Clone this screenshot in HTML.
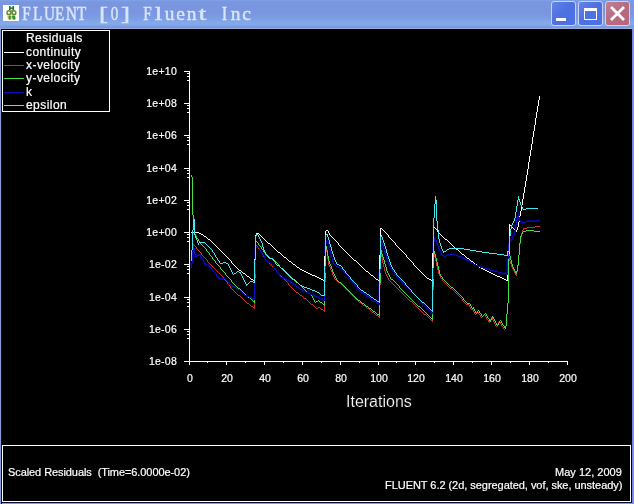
<!DOCTYPE html>
<html><head><meta charset="utf-8"><title>FLUENT [0] Fluent Inc</title>
<style>
html,body{margin:0;padding:0;background:#000;}
body{width:634px;height:504px;position:relative;overflow:hidden;font-family:"Liberation Sans",sans-serif;color:#fff;}
.t{position:absolute;white-space:nowrap;line-height:1;will-change:transform;-webkit-text-stroke:0.2px #fff;}
#tb{position:absolute;left:0;top:0;width:634px;height:29px;background:linear-gradient(to bottom,#7da2e7 0px,#7a96df 2px,#7a96df 13px,#7c9de3 18px,#83a9ec 23px,#82a7ea 25px,#7b99e0 27px,#7b99e0 28px,#97a9d6 28px,#97a9d6 29px);}
#bl{position:absolute;left:0;top:29px;width:2px;height:475px;background:linear-gradient(to right,#8c9cd6 0,#8c9cd6 1px,#0c0c2c 1px,#0c0c2c 2px);}
#br{position:absolute;left:632px;top:29px;width:2px;height:475px;background:linear-gradient(to right,#7384da 0,#7384da 1px,#8296e2 1px,#8296e2 2px);}
#bb{position:absolute;left:0;top:502px;width:634px;height:2px;background:linear-gradient(to bottom,#0c0c2c 0,#0c0c2c 1px,#8c9cd6 1px,#8c9cd6 2px);}
#ttl{left:21px;top:4px;font-family:"Liberation Serif",serif;font-size:18px;color:#d9e3fa;line-height:20px;-webkit-text-stroke:0.45px #dbe5fb;}
#ttl span{display:inline-block;width:11.02px;text-align:center;transform:scaleX(0.84);}
#ttl span.bk{transform:scaleX(1.5);}
#ttl span.lc{transform:scaleX(1.08);}
.btn{position:absolute;top:1px;width:23px;height:23px;border:1px solid #c6d3f7;border-radius:3px;}
.yl{font-size:10.5px;width:40px;text-align:right;left:137px;letter-spacing:0.25px;}
.xl{font-size:10.5px;width:40px;text-align:center;top:373px;}
.lg{font-size:12px;left:23px;letter-spacing:0.45px;}
.bt{font-size:11px;letter-spacing:-0.08px;}
</style></head><body>
<div id="tb"></div><div id="bb"></div><div id="bl"></div><div id="br"></div>
<svg style="position:absolute;left:3px;top:5px" width="16" height="16" viewBox="0 0 16 16"><rect width="16" height="16" fill="#fdfefb"/><g fill="#1f7d3a"><rect x="6" y="1" width="1.7" height="4.2"/><rect x="9.4" y="1" width="1.7" height="4.2"/><rect x="6.5" y="2.4" width="4" height="1.5"/></g><g fill="none" stroke="#5f8c30" stroke-width="1.5"><ellipse cx="5.9" cy="7.7" rx="1.9" ry="1.9"/><ellipse cx="10.9" cy="7.7" rx="1.9" ry="1.9"/></g><rect x="7.6" y="5.2" width="2" height="1.2" fill="#8a6a28"/><g fill="#3c8c2c"><rect x="5.6" y="10.6" width="2.2" height="4"/><rect x="8.6" y="10.6" width="3.6" height="2"/><rect x="9.6" y="12" width="2.8" height="2.6"/></g><g fill="#b4a63a"><rect x="4.6" y="10.8" width="1.2" height="2.4"/><rect x="8.4" y="12.6" width="1.2" height="1.6"/></g></svg>
<div class="t" id="ttl"><span>F</span><span>L</span><span>U</span><span>E</span><span>N</span><span>T</span><span>&nbsp;</span><span class="bk">[</span><span>0</span><span class="bk">]</span><span>&nbsp;</span><span>F</span><span class="bk">l</span><span class="lc">u</span><span class="lc">e</span><span class="lc">n</span><span class="bk">t</span><span>&nbsp;</span><span>I</span><span class="lc">n</span><span class="lc">c</span></div>
<div class="btn" style="left:551px;background:linear-gradient(135deg,#6384ea 0%,#4f70e0 45%,#4a72e6 100%);"></div>
<div class="btn" style="left:578px;background:linear-gradient(135deg,#6384ea 0%,#4f70e0 45%,#4a72e6 100%);"></div>
<div class="btn" style="left:605px;background:linear-gradient(135deg,#c47e94 0%,#b86c80 45%,#b4667c 100%);"></div>
<svg style="position:absolute;left:546px;top:0" width="88" height="29" viewBox="546 0 88 29"><rect x="556" y="18" width="10" height="3" fill="#fff" shape-rendering="crispEdges"/><g shape-rendering="crispEdges"><rect x="584" y="8" width="13" height="3" fill="#fff"/><rect x="584.5" y="8.5" width="12" height="11" fill="none" stroke="#fff"/></g><path d="M611 7 L624 20 M624 7 L611 20" stroke="#fff" stroke-width="2.8" stroke-linecap="butt" fill="none"/></svg>
<svg width="634" height="504" viewBox="0 0 634 504" style="position:absolute;left:0;top:0" shape-rendering="crispEdges"><g stroke="#fff" stroke-width="1" fill="none"><line x1="189.5" y1="71" x2="189.5" y2="362"/><line x1="184" y1="361.5" x2="568" y2="361.5"/><line x1="184" y1="71.5" x2="189" y2="71.5"/><line x1="187" y1="73.5" x2="189" y2="73.5"/><line x1="187" y1="76.5" x2="189" y2="76.5"/><line x1="187" y1="80.5" x2="189" y2="80.5"/><line x1="184" y1="103.5" x2="189" y2="103.5"/><line x1="187" y1="105.5" x2="189" y2="105.5"/><line x1="187" y1="108.5" x2="189" y2="108.5"/><line x1="187" y1="112.5" x2="189" y2="112.5"/><line x1="184" y1="135.5" x2="189" y2="135.5"/><line x1="187" y1="137.5" x2="189" y2="137.5"/><line x1="187" y1="140.5" x2="189" y2="140.5"/><line x1="187" y1="144.5" x2="189" y2="144.5"/><line x1="184" y1="168.5" x2="189" y2="168.5"/><line x1="187" y1="170.5" x2="189" y2="170.5"/><line x1="187" y1="173.5" x2="189" y2="173.5"/><line x1="187" y1="177.5" x2="189" y2="177.5"/><line x1="184" y1="200.5" x2="189" y2="200.5"/><line x1="187" y1="202.5" x2="189" y2="202.5"/><line x1="187" y1="205.5" x2="189" y2="205.5"/><line x1="187" y1="209.5" x2="189" y2="209.5"/><line x1="184" y1="232.5" x2="189" y2="232.5"/><line x1="187" y1="234.5" x2="189" y2="234.5"/><line x1="187" y1="237.5" x2="189" y2="237.5"/><line x1="187" y1="241.5" x2="189" y2="241.5"/><line x1="184" y1="264.5" x2="189" y2="264.5"/><line x1="187" y1="266.5" x2="189" y2="266.5"/><line x1="187" y1="269.5" x2="189" y2="269.5"/><line x1="187" y1="273.5" x2="189" y2="273.5"/><line x1="184" y1="297.5" x2="189" y2="297.5"/><line x1="187" y1="299.5" x2="189" y2="299.5"/><line x1="187" y1="302.5" x2="189" y2="302.5"/><line x1="187" y1="306.5" x2="189" y2="306.5"/><line x1="184" y1="329.5" x2="189" y2="329.5"/><line x1="187" y1="331.5" x2="189" y2="331.5"/><line x1="187" y1="334.5" x2="189" y2="334.5"/><line x1="187" y1="338.5" x2="189" y2="338.5"/><line x1="184" y1="361.5" x2="189" y2="361.5"/><line x1="189.50" y1="362" x2="189.50" y2="365"/><line x1="207.50" y1="362" x2="207.50" y2="363"/><line x1="226.50" y1="362" x2="226.50" y2="365"/><line x1="245.50" y1="362" x2="245.50" y2="363"/><line x1="264.50" y1="362" x2="264.50" y2="365"/><line x1="283.50" y1="362" x2="283.50" y2="363"/><line x1="302.50" y1="362" x2="302.50" y2="365"/><line x1="321.50" y1="362" x2="321.50" y2="363"/><line x1="340.50" y1="362" x2="340.50" y2="365"/><line x1="359.50" y1="362" x2="359.50" y2="363"/><line x1="378.50" y1="362" x2="378.50" y2="365"/><line x1="396.50" y1="362" x2="396.50" y2="363"/><line x1="415.50" y1="362" x2="415.50" y2="365"/><line x1="434.50" y1="362" x2="434.50" y2="363"/><line x1="453.50" y1="362" x2="453.50" y2="365"/><line x1="472.50" y1="362" x2="472.50" y2="363"/><line x1="491.50" y1="362" x2="491.50" y2="365"/><line x1="510.50" y1="362" x2="510.50" y2="363"/><line x1="529.50" y1="362" x2="529.50" y2="365"/><line x1="548.50" y1="362" x2="548.50" y2="363"/><line x1="567.50" y1="362" x2="567.50" y2="365"/></g><path d="M190.5 262v6M191.5 262v6M192.5 244v20M193.5 244v20M194.5 248v10M195.5 248v10M196.5 254v4M197.5 254v4M198.5 254v2M199.5 254v2M200.5 254v6M201.5 254v6M202.5 258v4M203.5 258v4M204.5 262v4M205.5 262v4M206.5 264v2M207.5 264v2M208.5 264v4M209.5 264v4M210.5 266v4M211.5 266v4M212.5 270v2M213.5 270v2M214.5 272v2M215.5 272v2M216.5 274v4M217.5 274v4M218.5 276v4M219.5 276v4M220.5 278v2M221.5 278v2M222.5 278v2M223.5 278v2M224.5 278v2M225.5 278v2M226.5 280v2M227.5 280v2M228.5 282v2M229.5 282v2M230.5 284v2M231.5 284v2M232.5 286v2M233.5 286v2M234.5 286v2M235.5 286v2M236.5 288v2M237.5 288v2M238.5 288v2M239.5 288v2M240.5 290v2M241.5 290v2M242.5 292v2M243.5 292v2M244.5 294v2M245.5 294v2M246.5 294v4M247.5 294v4M248.5 296v2M249.5 296v2M250.5 296v2M251.5 296v2M252.5 298v2M253.5 298v2M254.5 248v52M255.5 248v52M256.5 246v2M257.5 246v2M258.5 246v4M259.5 246v4M260.5 250v4M261.5 250v4M262.5 252v4M263.5 252v4M264.5 256v4M265.5 256v4M266.5 260v2M267.5 260v2M268.5 262v2M269.5 262v2M270.5 262v4M271.5 262v4M272.5 264v4M273.5 264v4M274.5 268v2M275.5 268v2M276.5 270v4M277.5 270v4M278.5 272v4M279.5 272v4M280.5 276v2M281.5 276v2M282.5 276v4M283.5 276v4M284.5 278v2M285.5 278v2M286.5 278v4M287.5 278v4M288.5 280v2M289.5 280v2M290.5 280v4M291.5 280v4M292.5 282v4M293.5 282v4M294.5 284v2M295.5 284v2M296.5 286v2M297.5 286v2M298.5 286v4M299.5 286v4M300.5 288v2M301.5 288v2M302.5 290v2M303.5 290v2M304.5 290v2M305.5 290v2M306.5 292v2M307.5 292v2M308.5 292v2M309.5 292v2M310.5 294v2M311.5 294v2M312.5 294v2M313.5 294v2M314.5 294v4M315.5 294v4M316.5 296v2M317.5 296v2M318.5 296v4M319.5 296v4M320.5 298v2M321.5 298v2M322.5 298v4M323.5 298v4M324.5 242v60M325.5 242v60M326.5 240v4M327.5 240v4M328.5 240v10M329.5 240v10M330.5 250v8M331.5 250v8M332.5 258v6M333.5 258v6M334.5 264v2M335.5 264v2M336.5 266v2M337.5 266v2M338.5 266v2M339.5 266v2M340.5 268v2M341.5 268v2M342.5 268v4M343.5 268v4M344.5 272v2M345.5 272v2M346.5 274v2M347.5 274v2M348.5 276v4M349.5 276v4M350.5 278v4M351.5 278v4M352.5 280v4M353.5 280v4M354.5 284v2M355.5 284v2M356.5 286v4M357.5 286v4M358.5 288v4M359.5 288v4M360.5 290v4M361.5 290v4M362.5 292v2M363.5 292v2M364.5 294v2M365.5 294v2M366.5 294v4M367.5 294v4M368.5 296v2M369.5 296v2M370.5 298v2M371.5 298v2M372.5 298v4M373.5 298v4M374.5 300v2M375.5 300v2M376.5 302v2M377.5 302v2M378.5 272v34M379.5 272v34M380.5 240v34M381.5 240v34M382.5 242v8M383.5 242v8M384.5 248v8M385.5 248v8M386.5 254v8M387.5 254v8M388.5 262v4M389.5 262v4M390.5 266v4M391.5 266v4M392.5 268v4M393.5 268v4M394.5 272v4M395.5 272v4M396.5 274v4M397.5 274v4M398.5 278v2M399.5 278v2M400.5 280v2M401.5 280v2M402.5 282v2M403.5 282v2M404.5 284v2M405.5 284v2M406.5 286v2M407.5 286v2M408.5 288v2M409.5 288v2M410.5 290v2M411.5 290v2M412.5 292v2M413.5 292v2M414.5 294v2M415.5 294v2M416.5 296v2M417.5 296v2M418.5 298v2M419.5 298v2M420.5 300v4M421.5 300v4M422.5 302v4M423.5 302v4M424.5 304v4M425.5 304v4M426.5 306v4M427.5 306v4M428.5 308v4M429.5 308v4M430.5 310v4M431.5 310v4M432.5 242v72M433.5 242v72M434.5 238v4M435.5 238v4M436.5 240v6M437.5 240v6M438.5 246v6M439.5 246v6M440.5 250v6M441.5 250v6M442.5 254v2M443.5 254v2M444.5 256v2M445.5 256v2M446.5 254v2M447.5 254v2M448.5 254v2M449.5 254v2M450.5 254v2M451.5 254v2M452.5 254v2M453.5 254v2M454.5 254v2M455.5 254v2M456.5 254v2M457.5 254v2M458.5 256v2M459.5 256v2M460.5 256v2M461.5 256v2M462.5 256v4M463.5 256v4M464.5 258v2M465.5 258v2M466.5 258v4M467.5 258v4M468.5 260v2M469.5 260v2M470.5 260v4M471.5 260v4M472.5 262v2M473.5 262v2M474.5 264v2M475.5 264v2M476.5 264v2M477.5 264v2M478.5 266v2M479.5 266v2M480.5 266v2M481.5 266v2M482.5 266v4M483.5 266v4M484.5 268v2M485.5 268v2M486.5 268v2M487.5 268v2M488.5 268v2M489.5 268v2M490.5 270v2M491.5 270v2M492.5 270v2M493.5 270v2M494.5 270v2M495.5 270v2M496.5 270v2M497.5 270v2M498.5 272v2M499.5 272v2M500.5 272v2M501.5 272v2M502.5 272v2M503.5 272v2M504.5 272v2M505.5 272v2M506.5 258v18M507.5 258v18M508.5 242v18M509.5 242v18M510.5 238v4M511.5 238v4M512.5 234v6M513.5 234v6M514.5 224v12M515.5 224v12M516.5 216v10M517.5 216v10M518.5 212v10M519.5 212v10M520.5 220v4M521.5 220v4M522.5 222v2M523.5 222v2M524.5 222v2M525.5 222v2M526.5 220v2M527.5 220v2M528.5 220v2M529.5 220v2M530.5 220v2M531.5 220v2M532.5 220v2M533.5 220v2M534.5 220v2M535.5 220v2M536.5 220v2M537.5 220v2M538.5 220v2M539.5 220v2" stroke="#00006a" stroke-width="1" fill="none"/><path d="M191.5 232v1M192.5 232v1M193.5 232v1M194.5 232v1M195.5 232v1M196.5 232v1M197.5 232v1M198.5 232v1M199.5 233v1M200.5 233v1M201.5 234v1M202.5 234v1M203.5 235v1M204.5 236v1M205.5 236v1M206.5 237v1M207.5 238v1M208.5 239v1M209.5 239v1M210.5 240v1M211.5 241v1M212.5 242v1M213.5 243v1M214.5 244v1M215.5 245v1M216.5 246v1M217.5 247v1M218.5 248v1M219.5 249v1M220.5 250v1M221.5 251v1M222.5 252v1M223.5 253v1M224.5 254v1M225.5 255v1M226.5 256v1M227.5 257v1M228.5 258v1M229.5 259v1M230.5 260v1M231.5 261v2M232.5 263v1M233.5 264v1M234.5 265v1M235.5 266v1M236.5 267v1M237.5 268v1M238.5 269v1M239.5 270v1M240.5 270v1M241.5 271v1M242.5 272v1M243.5 273v1M244.5 273v1M245.5 274v1M246.5 275v1M247.5 276v1M248.5 276v1M249.5 277v1M250.5 278v1M251.5 279v1M252.5 279v1M253.5 280v1M254.5 259v23M255.5 235v24M256.5 233v2M257.5 233v1M258.5 233v1M259.5 234v1M260.5 235v1M261.5 236v1M262.5 237v1M263.5 238v1M264.5 239v1M265.5 240v1M266.5 241v1M267.5 242v1M268.5 243v1M269.5 243v1M270.5 244v1M271.5 245v1M272.5 246v1M273.5 247v1M274.5 248v1M275.5 249v1M276.5 250v1M277.5 251v1M278.5 252v1M279.5 252v1M280.5 253v1M281.5 254v1M282.5 255v1M283.5 256v1M284.5 257v1M285.5 257v1M286.5 258v1M287.5 259v1M288.5 260v1M289.5 261v1M290.5 261v1M291.5 262v1M292.5 263v1M293.5 264v1M294.5 264v1M295.5 265v1M296.5 266v1M297.5 267v1M298.5 267v1M299.5 268v1M300.5 269v1M301.5 269v1M302.5 270v1M303.5 270v1M304.5 271v1M305.5 271v1M306.5 272v1M307.5 272v1M308.5 273v1M309.5 273v1M310.5 274v1M311.5 274v1M312.5 275v1M313.5 275v1M314.5 275v1M315.5 276v1M316.5 276v1M317.5 277v1M318.5 277v1M319.5 278v1M320.5 278v1M321.5 279v1M322.5 279v1M323.5 280v1M324.5 256v25M325.5 231v25M326.5 230v1M327.5 230v1M328.5 231v2M329.5 233v2M330.5 235v1M331.5 236v1M332.5 237v1M333.5 238v1M334.5 239v1M335.5 240v1M336.5 241v1M337.5 242v1M338.5 243v2M339.5 245v1M340.5 246v1M341.5 247v1M342.5 248v1M343.5 249v1M344.5 250v1M345.5 251v1M346.5 252v1M347.5 253v1M348.5 254v1M349.5 255v1M350.5 256v1M351.5 257v1M352.5 258v1M353.5 259v1M354.5 260v1M355.5 260v1M356.5 261v1M357.5 262v1M358.5 263v1M359.5 264v1M360.5 265v1M361.5 266v1M362.5 267v1M363.5 268v1M364.5 269v1M365.5 270v1M366.5 271v1M367.5 271v1M368.5 272v1M369.5 273v1M370.5 274v1M371.5 275v1M372.5 275v1M373.5 276v1M374.5 277v1M375.5 278v1M376.5 279v1M377.5 279v1M378.5 280v1M379.5 255v27M380.5 228v27M381.5 228v1M382.5 229v1M383.5 230v1M384.5 231v1M385.5 232v1M386.5 233v1M387.5 234v1M388.5 235v2M389.5 237v1M390.5 238v1M391.5 239v1M392.5 240v1M393.5 241v1M394.5 242v1M395.5 243v2M396.5 245v1M397.5 246v1M398.5 247v1M399.5 248v1M400.5 249v1M401.5 250v1M402.5 251v1M403.5 252v1M404.5 253v1M405.5 254v1M406.5 255v2M407.5 257v1M408.5 258v1M409.5 259v1M410.5 260v1M411.5 261v1M412.5 262v1M413.5 263v2M414.5 265v1M415.5 266v1M416.5 267v1M417.5 268v1M418.5 269v1M419.5 270v1M420.5 271v1M421.5 272v1M422.5 273v1M423.5 274v1M424.5 275v1M425.5 276v1M426.5 277v1M427.5 278v1M428.5 278v1M429.5 279v1M430.5 279v1M431.5 280v1M432.5 253v28M433.5 226v27M434.5 227v1M435.5 228v1M436.5 229v1M437.5 230v2M438.5 232v1M439.5 233v1M440.5 234v1M441.5 235v1M442.5 236v1M443.5 237v1M444.5 238v1M445.5 239v1M446.5 239v1M447.5 240v1M448.5 241v1M449.5 242v1M450.5 243v1M451.5 244v1M452.5 245v1M453.5 246v1M454.5 247v1M455.5 248v1M456.5 249v1M457.5 249v1M458.5 250v1M459.5 251v1M460.5 252v1M461.5 253v1M462.5 254v1M463.5 254v1M464.5 255v1M465.5 256v1M466.5 257v1M467.5 258v1M468.5 258v1M469.5 259v1M470.5 260v1M471.5 261v1M472.5 261v1M473.5 262v1M474.5 263v1M475.5 264v1M476.5 264v1M477.5 265v1M478.5 266v1M479.5 267v1M480.5 267v1M481.5 268v1M482.5 268v1M483.5 269v1M484.5 269v1M485.5 270v1M486.5 270v1M487.5 271v1M488.5 271v1M489.5 272v1M490.5 272v1M491.5 273v1M492.5 273v1M493.5 274v1M494.5 274v1M495.5 275v1M496.5 275v1M497.5 276v1M498.5 276v1M499.5 276v1M500.5 277v1M501.5 277v1M502.5 278v1M503.5 278v1M504.5 279v1M505.5 279v1M506.5 280v1M507.5 275v6M508.5 254v21M509.5 224v30M510.5 225v1M511.5 226v1M512.5 227v1M513.5 228v1M514.5 229v1M515.5 230v1M516.5 230v2M517.5 227v3M518.5 222v5M519.5 216v6M520.5 211v5M521.5 205v6M522.5 199v6M523.5 193v6M524.5 187v6M525.5 181v6M526.5 175v6M527.5 169v6M528.5 162v7M529.5 156v6M530.5 150v6M531.5 144v6M532.5 137v7M533.5 131v6M534.5 125v6M535.5 118v7M536.5 112v6M537.5 106v6M538.5 100v6M539.5 96v4" stroke="#ffffff" stroke-width="1" fill="none"/><path d="M193.5 244v3M194.5 245v1M195.5 246v1M196.5 247v2M197.5 249v1M198.5 250v1M199.5 251v1M200.5 252v1M201.5 253v2M202.5 255v1M203.5 256v1M204.5 257v1M205.5 258v1M206.5 259v1M207.5 260v2M208.5 262v1M209.5 263v1M210.5 264v1M211.5 265v1M212.5 266v1M213.5 267v1M214.5 268v1M215.5 269v1M216.5 270v1M217.5 271v1M218.5 272v1M219.5 273v1M220.5 274v1M221.5 275v1M222.5 276v1M223.5 277v1M224.5 278v2M225.5 280v1M226.5 281v1M227.5 282v2M228.5 284v1M229.5 285v1M230.5 286v2M231.5 288v1M232.5 289v1M233.5 290v1M234.5 291v1M235.5 292v1M236.5 293v1M237.5 294v1M238.5 295v1M239.5 295v1M240.5 296v1M241.5 297v1M242.5 298v1M243.5 299v1M244.5 300v1M245.5 301v1M246.5 302v1M247.5 303v1M248.5 303v1M249.5 304v1M250.5 305v1M251.5 306v1M252.5 306v1M253.5 307v1M254.5 278v31M255.5 246v32M256.5 245v1M257.5 246v2M258.5 248v1M259.5 249v1M260.5 250v2M261.5 252v1M262.5 253v2M263.5 255v2M264.5 257v1M265.5 258v2M266.5 260v1M267.5 261v1M268.5 262v1M269.5 263v1M270.5 264v1M271.5 265v1M272.5 266v1M273.5 267v1M274.5 268v1M275.5 269v1M276.5 270v2M277.5 272v1M278.5 273v1M279.5 274v1M280.5 275v1M281.5 276v1M282.5 277v1M283.5 278v1M284.5 279v1M285.5 280v1M286.5 281v1M287.5 282v1M288.5 283v2M289.5 285v1M290.5 286v1M291.5 287v1M292.5 288v1M293.5 289v1M294.5 290v1M295.5 291v1M296.5 292v1M297.5 292v1M298.5 293v1M299.5 294v1M300.5 295v1M301.5 295v1M302.5 296v1M303.5 297v1M304.5 298v1M305.5 298v1M306.5 299v1M307.5 300v1M308.5 301v1M309.5 302v1M310.5 303v1M311.5 304v1M312.5 304v1M313.5 305v1M314.5 306v1M315.5 307v1M316.5 308v1M317.5 308v1M318.5 307v1M319.5 307v1M320.5 308v1M321.5 309v1M322.5 309v1M323.5 310v1M324.5 282v30M325.5 251v31M326.5 249v3M327.5 252v7M328.5 259v6M329.5 265v2M330.5 267v3M331.5 270v2M332.5 272v3M333.5 275v2M334.5 277v2M335.5 279v1M336.5 280v1M337.5 281v1M338.5 282v1M339.5 282v1M340.5 283v1M341.5 284v1M342.5 285v1M343.5 286v1M344.5 287v1M345.5 288v1M346.5 289v1M347.5 290v1M348.5 291v1M349.5 292v1M350.5 293v1M351.5 294v1M352.5 295v1M353.5 296v1M354.5 297v1M355.5 298v1M356.5 299v1M357.5 300v1M358.5 301v1M359.5 302v1M360.5 302v1M361.5 303v1M362.5 304v1M363.5 305v1M364.5 305v1M365.5 306v1M366.5 307v1M367.5 308v1M368.5 308v1M369.5 309v1M370.5 310v1M371.5 311v1M372.5 312v1M373.5 312v1M374.5 313v1M375.5 314v1M376.5 315v1M377.5 315v1M378.5 316v1M379.5 285v33M380.5 252v33M381.5 251v6M382.5 257v6M383.5 263v4M384.5 267v4M385.5 271v3M386.5 274v2M387.5 276v2M388.5 278v2M389.5 280v1M390.5 281v1M391.5 282v1M392.5 283v1M393.5 284v1M394.5 285v1M395.5 286v1M396.5 287v1M397.5 288v1M398.5 289v1M399.5 290v1M400.5 291v1M401.5 292v1M402.5 293v1M403.5 294v1M404.5 295v1M405.5 296v1M406.5 297v1M407.5 298v1M408.5 299v1M409.5 300v1M410.5 301v1M411.5 301v1M412.5 302v1M413.5 303v1M414.5 304v1M415.5 305v1M416.5 306v1M417.5 307v1M418.5 308v1M419.5 309v1M420.5 310v1M421.5 311v1M422.5 312v1M423.5 313v1M424.5 314v1M425.5 314v1M426.5 315v1M427.5 316v1M428.5 317v1M429.5 318v1M430.5 319v1M431.5 320v1M432.5 290v32M433.5 256v34M434.5 254v3M435.5 257v4M436.5 261v5M437.5 266v4M438.5 270v4M439.5 274v2M440.5 276v2M441.5 278v1M442.5 279v2M443.5 281v1M444.5 282v1M445.5 283v1M446.5 284v1M447.5 285v1M448.5 286v1M449.5 287v1M450.5 288v1M451.5 288v1M452.5 289v1M453.5 290v1M454.5 291v1M455.5 292v1M456.5 293v1M457.5 294v1M458.5 295v1M459.5 296v1M460.5 297v1M461.5 298v1M462.5 299v2M463.5 301v1M464.5 302v1M465.5 303v1M466.5 304v1M467.5 304v1M468.5 304v1M469.5 305v2M470.5 307v2M471.5 309v1M472.5 308v2M473.5 310v2M474.5 312v2M475.5 314v1M476.5 312v2M477.5 311v1M478.5 312v2M479.5 314v1M480.5 315v2M481.5 317v1M482.5 316v1M483.5 315v1M484.5 314v1M485.5 315v2M486.5 317v2M487.5 319v1M488.5 320v2M489.5 321v2M490.5 319v2M491.5 317v2M492.5 318v2M493.5 320v2M494.5 322v2M495.5 324v2M496.5 326v1M497.5 324v2M498.5 322v2M499.5 321v1M500.5 322v2M501.5 324v2M502.5 326v1M503.5 327v2M504.5 329v1" stroke="#d02c2c" stroke-width="1" fill="none"/><path d="M508.5 256v2M509.5 258v3M510.5 261v3M511.5 264v3M512.5 267v2M513.5 269v2M514.5 271v2M515.5 273v2M516.5 272v4M517.5 266v6M518.5 255v11M519.5 244v11M520.5 237v7M521.5 233v4M522.5 230v3M523.5 228v2M524.5 228v1M525.5 228v1M526.5 228v1M527.5 227v1M528.5 227v1M529.5 227v1M530.5 227v1M531.5 227v1M532.5 227v1M533.5 227v1M534.5 227v1M535.5 226v1M536.5 226v1M537.5 226v1M538.5 226v1M539.5 226v1" stroke="#d02c2c" stroke-width="1" fill="none"/><path d="M191.5 175v2M192.5 177v38M193.5 215v13M194.5 228v6M195.5 234v2M196.5 236v2M197.5 238v1M198.5 239v2M199.5 241v2M200.5 243v1M201.5 244v1M202.5 245v1M203.5 246v1M204.5 247v1M205.5 248v1M206.5 249v2M207.5 251v1M208.5 252v1M209.5 253v2M210.5 255v1M211.5 256v1M212.5 257v2M213.5 259v1M214.5 260v1M215.5 261v2M216.5 263v1M217.5 264v1M218.5 265v1M219.5 266v1M220.5 267v2M221.5 269v1M222.5 270v1M223.5 271v1M224.5 272v1M225.5 273v2M226.5 275v1M227.5 276v1M228.5 277v1M229.5 278v1M230.5 279v1M231.5 280v2M232.5 282v1M233.5 283v1M234.5 284v1M235.5 285v1M236.5 286v1M237.5 287v1M238.5 288v1M239.5 288v1M240.5 289v1M241.5 290v1M242.5 291v1M243.5 292v1M244.5 293v1M245.5 294v1M246.5 295v1M247.5 296v1M248.5 297v1M249.5 297v1M250.5 298v1M251.5 299v1M252.5 300v1M253.5 301v1M254.5 273v30M255.5 242v31M256.5 241v1M257.5 242v1M258.5 243v2M259.5 245v1M260.5 246v1M261.5 247v2M262.5 249v1M263.5 250v2M264.5 252v1M265.5 253v2M266.5 255v1M267.5 256v1M268.5 257v1M269.5 257v1M270.5 258v1M271.5 258v1M272.5 259v1M273.5 260v1M274.5 260v1M275.5 261v1M276.5 262v1M277.5 263v1M278.5 264v1M279.5 265v2M280.5 267v1M281.5 268v1M282.5 269v1M283.5 270v1M284.5 271v1M285.5 272v1M286.5 273v1M287.5 274v1M288.5 275v1M289.5 276v1M290.5 277v1M291.5 278v1M292.5 279v1M293.5 279v1M294.5 280v1M295.5 281v1M296.5 282v1M297.5 282v1M298.5 283v1M299.5 284v1M300.5 285v1M301.5 286v1M302.5 287v1M303.5 288v1M304.5 289v1M305.5 290v1M306.5 291v1M307.5 292v1M308.5 293v1M309.5 293v1M310.5 294v1M311.5 295v1M312.5 296v2M313.5 298v2M314.5 300v2M315.5 302v1M316.5 301v1M317.5 301v1M318.5 300v1M319.5 301v1M320.5 302v1M321.5 302v1M322.5 303v1M323.5 304v1M324.5 278v28M325.5 248v30M326.5 246v4M327.5 250v6M328.5 256v5M329.5 261v3M330.5 264v2M331.5 266v3M332.5 269v3M333.5 272v2M334.5 274v2M335.5 276v2M336.5 278v2M337.5 280v1M338.5 281v1M339.5 282v1M340.5 282v1M341.5 283v1M342.5 284v1M343.5 285v1M344.5 286v1M345.5 287v1M346.5 288v1M347.5 289v1M348.5 290v1M349.5 291v1M350.5 292v1M351.5 293v1M352.5 294v1M353.5 295v1M354.5 296v1M355.5 297v1M356.5 298v1M357.5 299v1M358.5 300v1M359.5 300v1M360.5 301v1M361.5 302v1M362.5 303v1M363.5 303v1M364.5 304v1M365.5 305v1M366.5 306v1M367.5 306v1M368.5 307v1M369.5 308v1M370.5 308v1M371.5 309v1M372.5 310v1M373.5 311v1M374.5 311v1M375.5 312v1M376.5 313v1M377.5 314v1M378.5 314v1M379.5 283v33M380.5 248v35M381.5 250v4M382.5 254v3M383.5 257v3M384.5 260v4M385.5 264v3M386.5 267v4M387.5 271v2M388.5 273v2M389.5 275v2M390.5 277v2M391.5 279v1M392.5 279v1M393.5 280v1M394.5 281v1M395.5 282v1M396.5 283v1M397.5 284v1M398.5 285v1M399.5 286v2M400.5 288v1M401.5 289v1M402.5 290v1M403.5 291v1M404.5 292v1M405.5 293v1M406.5 294v1M407.5 295v1M408.5 296v1M409.5 297v1M410.5 298v1M411.5 299v1M412.5 300v1M413.5 301v1M414.5 302v1M415.5 303v1M416.5 304v1M417.5 305v1M418.5 306v1M419.5 306v1M420.5 307v1M421.5 308v1M422.5 309v1M423.5 310v1M424.5 311v1M425.5 312v1M426.5 313v1M427.5 314v1M428.5 315v1M429.5 316v1M430.5 317v1M431.5 318v1M432.5 287v33M433.5 253v34M434.5 251v3M435.5 254v4M436.5 258v4M437.5 262v4M438.5 266v4M439.5 270v4M440.5 274v2M441.5 276v1M442.5 277v2M443.5 279v1M444.5 280v1M445.5 281v1M446.5 282v1M447.5 283v1M448.5 284v1M449.5 285v1M450.5 286v1M451.5 287v1M452.5 287v1M453.5 288v1M454.5 289v1M455.5 290v1M456.5 291v1M457.5 292v1M458.5 293v1M459.5 294v1M460.5 295v1M461.5 296v1M462.5 297v1M463.5 298v2M464.5 300v1M465.5 301v1M466.5 302v1M467.5 303v1M468.5 303v1M469.5 303v1M470.5 304v2M471.5 306v2M472.5 308v1M473.5 307v2M474.5 309v2M475.5 311v2M476.5 313v1M477.5 311v2M478.5 310v1M479.5 311v2M480.5 313v1M481.5 314v2M482.5 316v1M483.5 315v1M484.5 314v1M485.5 313v1M486.5 314v2M487.5 316v2M488.5 318v1M489.5 319v2M490.5 320v2M491.5 318v2M492.5 316v2M493.5 317v2M494.5 319v2M495.5 321v2M496.5 323v2M497.5 325v1M498.5 323v2M499.5 321v2M500.5 320v1M501.5 321v2M502.5 323v2M503.5 325v1M504.5 326v2M505.5 326v3M506.5 314v12M507.5 303v11M508.5 253v50M509.5 254v2M510.5 256v4M511.5 260v4M512.5 264v3M513.5 267v2M514.5 269v2M515.5 271v2M516.5 271v3M517.5 265v6M518.5 255v10M519.5 243v12M520.5 236v7M521.5 234v2M522.5 232v2M523.5 231v1M524.5 231v1M525.5 231v1M526.5 230v1M527.5 230v1M528.5 230v1M529.5 230v1M530.5 230v1M531.5 230v1M532.5 230v1M533.5 230v1M534.5 231v1M535.5 231v1M536.5 231v1M537.5 231v1M538.5 231v1M539.5 231v1" stroke="#40e040" stroke-width="1" fill="none"/><path d="M191.5 263v5M192.5 252v11M193.5 245v7M194.5 248v6M195.5 254v3M196.5 256v1M197.5 255v1M198.5 255v1M199.5 254v1M200.5 255v2M201.5 257v2M202.5 259v1M203.5 260v2M204.5 262v2M205.5 264v1M206.5 264v1M207.5 265v1M208.5 265v1M209.5 266v1M210.5 267v1M211.5 268v2M212.5 270v1M213.5 271v1M214.5 272v1M215.5 273v1M216.5 274v2M217.5 276v1M218.5 277v1M219.5 278v1M220.5 278v1M221.5 278v1M222.5 278v1M223.5 278v1M224.5 278v1M225.5 279v1M226.5 280v1M227.5 281v1M228.5 282v1M229.5 283v1M230.5 284v1M231.5 285v1M232.5 286v1M233.5 286v1M234.5 287v1M235.5 287v1M236.5 288v1M237.5 288v1M238.5 289v1M239.5 289v1M240.5 290v1M241.5 291v1M242.5 292v1M243.5 293v1M244.5 294v1M245.5 295v1M246.5 295v1M247.5 296v1M248.5 296v1M249.5 297v1M250.5 297v1M251.5 297v1M252.5 298v1M253.5 298v1M254.5 274v26M255.5 248v26M256.5 247v1M257.5 247v1M258.5 247v1M259.5 248v2M260.5 250v2M261.5 252v1M262.5 253v2M263.5 255v1M264.5 256v2M265.5 258v2M266.5 260v1M267.5 261v1M268.5 262v1M269.5 262v1M270.5 263v1M271.5 264v1M272.5 265v1M273.5 266v2M274.5 268v1M275.5 269v1M276.5 270v2M277.5 272v1M278.5 273v1M279.5 274v2M280.5 276v1M281.5 277v1M282.5 277v1M283.5 278v1M284.5 278v1M285.5 279v1M286.5 279v1M287.5 280v1M288.5 280v1M289.5 281v1M290.5 281v1M291.5 282v1M292.5 283v1M293.5 284v1M294.5 284v1M295.5 285v1M296.5 286v1M297.5 287v1M298.5 287v1M299.5 288v1M300.5 289v1M301.5 289v1M302.5 290v1M303.5 290v1M304.5 291v1M305.5 291v1M306.5 292v1M307.5 292v1M308.5 293v1M309.5 293v1M310.5 294v1M311.5 294v1M312.5 295v1M313.5 295v1M314.5 295v1M315.5 296v1M316.5 296v1M317.5 297v1M318.5 297v1M319.5 298v1M320.5 298v1M321.5 299v1M322.5 299v1M323.5 300v1M324.5 273v28M325.5 243v30M326.5 241v2M327.5 241v1M328.5 241v3M329.5 244v6M330.5 250v4M331.5 254v4M332.5 258v4M333.5 262v2M334.5 264v1M335.5 265v1M336.5 266v1M337.5 266v1M338.5 267v1M339.5 267v1M340.5 268v1M341.5 268v1M342.5 269v1M343.5 270v2M344.5 272v1M345.5 273v1M346.5 274v1M347.5 275v1M348.5 276v2M349.5 278v1M350.5 279v1M351.5 280v1M352.5 281v2M353.5 283v1M354.5 284v1M355.5 285v1M356.5 286v1M357.5 287v2M358.5 289v1M359.5 290v1M360.5 291v1M361.5 292v1M362.5 292v1M363.5 293v1M364.5 294v1M365.5 294v1M366.5 295v1M367.5 296v1M368.5 296v1M369.5 297v1M370.5 298v1M371.5 299v1M372.5 299v1M373.5 300v1M374.5 301v1M375.5 301v1M376.5 302v1M377.5 303v1M378.5 303v1M379.5 273v32M380.5 242v31M381.5 241v2M382.5 243v2M383.5 245v4M384.5 249v3M385.5 252v3M386.5 255v4M387.5 259v3M388.5 262v2M389.5 264v2M390.5 266v2M391.5 268v1M392.5 269v2M393.5 271v1M394.5 272v2M395.5 274v1M396.5 275v2M397.5 277v1M398.5 278v1M399.5 279v1M400.5 280v1M401.5 281v1M402.5 282v1M403.5 283v1M404.5 284v1M405.5 285v1M406.5 286v1M407.5 287v1M408.5 288v1M409.5 289v1M410.5 290v1M411.5 291v1M412.5 292v1M413.5 293v1M414.5 294v1M415.5 295v1M416.5 296v1M417.5 297v1M418.5 298v1M419.5 299v1M420.5 300v1M421.5 301v2M422.5 303v1M423.5 304v1M424.5 305v1M425.5 306v1M426.5 307v1M427.5 308v1M428.5 309v1M429.5 310v1M430.5 311v1M431.5 312v1M432.5 279v35M433.5 242v37M434.5 238v4M435.5 238v2M436.5 240v3M437.5 243v3M438.5 246v3M439.5 249v2M440.5 251v2M441.5 253v2M442.5 255v1M443.5 255v1M444.5 256v1M445.5 256v1M446.5 255v1M447.5 255v1M448.5 254v1M449.5 254v1M450.5 254v1M451.5 254v1M452.5 254v1M453.5 254v1M454.5 254v1M455.5 254v1M456.5 255v1M457.5 255v1M458.5 256v1M459.5 256v1M460.5 256v1M461.5 257v1M462.5 257v1M463.5 258v1M464.5 258v1M465.5 259v1M466.5 259v1M467.5 260v1M468.5 260v1M469.5 261v1M470.5 261v1M471.5 262v1M472.5 262v1M473.5 263v1M474.5 264v1M475.5 264v1M476.5 265v1M477.5 265v1M478.5 266v1M479.5 266v1M480.5 267v1M481.5 267v1M482.5 267v1M483.5 268v1M484.5 268v1M485.5 268v1M486.5 268v1M487.5 269v1M488.5 269v1M489.5 269v1M490.5 270v1M491.5 270v1M492.5 270v1M493.5 270v1M494.5 271v1M495.5 271v1M496.5 271v1M497.5 271v1M498.5 272v1M499.5 272v1M500.5 272v1M501.5 272v1M502.5 273v1M503.5 273v1M504.5 273v1M505.5 273v1M506.5 274v1M507.5 259v16M508.5 244v15M509.5 242v2M510.5 241v1M511.5 239v2M512.5 237v2M513.5 235v2M514.5 231v4M515.5 225v6M516.5 220v5M517.5 216v4M518.5 213v4M519.5 217v4M520.5 221v1M521.5 222v1M522.5 222v1M523.5 222v1M524.5 222v1M525.5 222v1M526.5 221v1M527.5 221v1M528.5 221v1M529.5 221v1M530.5 221v1M531.5 221v1M532.5 221v1M533.5 221v1M534.5 221v1M535.5 220v1M536.5 220v1M537.5 220v1M538.5 220v1M539.5 220v1" stroke="#0e0eb8" stroke-width="1" fill="none"/><path d="M191.5 250v11M192.5 230v20M193.5 219v11M194.5 219v16M195.5 235v3M196.5 238v2M197.5 240v3M198.5 243v2M199.5 242v1M200.5 242v1M201.5 242v1M202.5 242v1M203.5 242v1M204.5 242v1M205.5 243v1M206.5 244v1M207.5 245v1M208.5 246v1M209.5 247v1M210.5 248v1M211.5 249v1M212.5 250v2M213.5 252v1M214.5 253v2M215.5 255v2M216.5 257v1M217.5 258v2M218.5 260v1M219.5 261v2M220.5 263v1M221.5 263v1M222.5 263v1M223.5 262v1M224.5 262v1M225.5 262v1M226.5 263v1M227.5 263v1M228.5 264v2M229.5 266v2M230.5 268v2M231.5 270v2M232.5 272v2M233.5 274v1M234.5 273v1M235.5 273v1M236.5 272v1M237.5 271v1M238.5 271v1M239.5 272v1M240.5 272v2M241.5 274v2M242.5 276v2M243.5 278v2M244.5 280v2M245.5 282v2M246.5 284v2M247.5 284v1M248.5 283v1M249.5 282v1M250.5 281v1M251.5 281v1M252.5 281v1M253.5 282v1M254.5 260v23M255.5 236v24M256.5 234v2M257.5 234v1M258.5 235v2M259.5 237v2M260.5 239v2M261.5 241v2M262.5 243v4M263.5 247v3M264.5 250v2M265.5 252v2M266.5 254v1M267.5 255v1M268.5 256v2M269.5 258v1M270.5 258v1M271.5 258v1M272.5 258v1M273.5 259v2M274.5 261v1M275.5 262v2M276.5 264v1M277.5 265v1M278.5 265v1M279.5 266v1M280.5 267v1M281.5 268v1M282.5 268v1M283.5 269v1M284.5 270v1M285.5 271v1M286.5 272v1M287.5 273v1M288.5 274v1M289.5 275v1M290.5 276v1M291.5 277v1M292.5 278v1M293.5 279v1M294.5 279v1M295.5 280v1M296.5 281v1M297.5 282v1M298.5 283v1M299.5 284v1M300.5 285v1M301.5 285v1M302.5 286v1M303.5 286v1M304.5 287v1M305.5 287v1M306.5 287v1M307.5 288v1M308.5 288v1M309.5 288v1M310.5 289v1M311.5 289v1M312.5 290v1M313.5 290v1M314.5 290v1M315.5 291v1M316.5 291v1M317.5 292v1M318.5 292v1M319.5 293v1M320.5 294v1M321.5 295v1M322.5 295v1M323.5 295v1M324.5 266v30M325.5 235v31M326.5 234v1M327.5 234v3M328.5 237v3M329.5 240v4M330.5 244v3M331.5 247v4M332.5 251v3M333.5 254v3M334.5 257v3M335.5 260v2M336.5 262v2M337.5 264v1M338.5 264v1M339.5 265v1M340.5 265v1M341.5 266v1M342.5 267v2M343.5 269v1M344.5 270v1M345.5 271v2M346.5 273v1M347.5 274v1M348.5 275v1M349.5 276v1M350.5 277v2M351.5 279v1M352.5 280v1M353.5 281v1M354.5 282v1M355.5 283v1M356.5 284v1M357.5 285v2M358.5 287v1M359.5 288v1M360.5 289v1M361.5 290v1M362.5 290v1M363.5 291v1M364.5 292v1M365.5 292v1M366.5 293v1M367.5 294v1M368.5 294v1M369.5 295v1M370.5 296v1M371.5 297v1M372.5 297v1M373.5 298v1M374.5 299v1M375.5 299v1M376.5 300v1M377.5 301v1M378.5 301v1M379.5 269v34M380.5 236v33M381.5 235v2M382.5 237v3M383.5 240v3M384.5 243v3M385.5 246v3M386.5 249v4M387.5 253v3M388.5 256v3M389.5 259v3M390.5 262v3M391.5 265v2M392.5 267v2M393.5 269v1M394.5 270v2M395.5 272v1M396.5 273v2M397.5 275v1M398.5 276v1M399.5 277v1M400.5 278v1M401.5 279v1M402.5 280v1M403.5 281v1M404.5 282v1M405.5 283v2M406.5 285v1M407.5 286v1M408.5 287v1M409.5 288v1M410.5 289v1M411.5 290v2M412.5 292v1M413.5 293v1M414.5 294v1M415.5 295v1M416.5 296v1M417.5 297v1M418.5 298v1M419.5 299v1M420.5 300v1M421.5 301v1M422.5 302v1M423.5 302v1M424.5 303v1M425.5 304v1M426.5 305v1M427.5 306v1M428.5 307v1M429.5 308v1M430.5 309v1M431.5 310v1M432.5 268v44M433.5 218v50M434.5 204v14M435.5 196v8M436.5 200v21M437.5 221v9M438.5 230v9M439.5 239v4M440.5 243v3M441.5 246v3M442.5 249v2M443.5 251v2M444.5 251v1M445.5 251v1M446.5 250v1M447.5 249v1M448.5 249v1M449.5 248v1M450.5 248v1M451.5 248v1M452.5 248v1M453.5 248v1M454.5 248v1M455.5 248v1M456.5 248v1M457.5 248v1M458.5 248v1M459.5 248v1M460.5 248v1M461.5 248v1M462.5 248v1M463.5 248v1M464.5 249v1M465.5 249v1M466.5 249v1M467.5 249v1M468.5 249v1M469.5 249v1M470.5 250v1M471.5 250v1M472.5 250v1M473.5 250v1M474.5 250v1M475.5 250v1M476.5 251v1M477.5 251v1M478.5 251v1M479.5 251v1M480.5 251v1M481.5 251v1M482.5 252v1M483.5 252v1M484.5 252v1M485.5 252v1M486.5 252v1M487.5 252v1M488.5 252v1M489.5 253v1M490.5 253v1M491.5 253v1M492.5 253v1M493.5 253v1M494.5 253v1M495.5 253v1M496.5 253v1M497.5 254v1M498.5 254v1M499.5 254v1M500.5 254v1M501.5 254v1M502.5 254v1M503.5 254v1M504.5 255v1M505.5 255v1M506.5 255v1M507.5 251v5M508.5 251v1M509.5 236v16M510.5 229v7M511.5 225v4M512.5 223v2M513.5 221v2M514.5 218v3M515.5 212v6M516.5 206v6M517.5 200v6M518.5 196v4M519.5 199v3M520.5 202v3M521.5 205v2M522.5 207v2M523.5 209v1M524.5 209v1M525.5 209v1M526.5 208v1M527.5 208v1M528.5 208v1M529.5 208v1M530.5 208v1M531.5 208v1M532.5 208v1M533.5 208v1M534.5 208v1M535.5 208v1M536.5 208v1M537.5 208v1" stroke="#40e8f0" stroke-width="1" fill="none"/><rect x="2.5" y="30.5" width="107" height="81" fill="none" stroke="#fff"/><line x1="4" y1="52.5" x2="24" y2="52.5" stroke="#ffffff"/><line x1="4" y1="65.5" x2="24" y2="65.5" stroke="#d02c2c"/><line x1="4" y1="78.5" x2="24" y2="78.5" stroke="#40e040"/><line x1="4" y1="92.5" x2="24" y2="92.5" stroke="#0e0eb8"/><line x1="4" y1="105.5" x2="24" y2="105.5" stroke="#40e8f0"/><rect x="2.5" y="445.5" width="628" height="56" fill="none" stroke="#fff"/></svg>
<div class="t yl" style="top:66.0px">1e+10</div><div class="t yl" style="top:98.0px">1e+08</div><div class="t yl" style="top:130.0px">1e+06</div><div class="t yl" style="top:163.0px">1e+04</div><div class="t yl" style="top:195.0px">1e+02</div><div class="t yl" style="top:227.0px">1e+00</div><div class="t yl" style="top:259.0px">1e-02</div><div class="t yl" style="top:292.0px">1e-04</div><div class="t yl" style="top:324.0px">1e-06</div><div class="t yl" style="top:356.0px">1e-08</div><div class="t xl" style="left:169.5px">0</div><div class="t xl" style="left:207.3px">20</div><div class="t xl" style="left:245.1px">40</div><div class="t xl" style="left:282.9px">60</div><div class="t xl" style="left:320.7px">80</div><div class="t xl" style="left:358.5px">100</div><div class="t xl" style="left:396.3px">120</div><div class="t xl" style="left:434.1px">140</div><div class="t xl" style="left:471.9px">160</div><div class="t xl" style="left:509.7px">180</div><div class="t xl" style="left:547.5px">200</div><div class="t" style="left:346px;top:394px;font-size:16px;-webkit-text-stroke:0.2px #000;color:#fff">Iterations</div><div style="position:absolute;left:3px;top:31px;width:106px;height:80px;overflow:hidden"><div class="t lg" style="top:1.1px">Residuals</div><div class="t lg" style="top:14.5px">continuity</div><div class="t lg" style="top:27.9px">x-velocity</div><div class="t lg" style="top:41.3px">y-velocity</div><div class="t lg" style="top:54.7px">k</div><div class="t lg" style="top:68.1px">epsilon</div></div><div class="t bt" style="left:8px;top:467px;">Scaled Residuals &nbsp;(Time=6.0000e-02)</div><div class="t bt" style="right:12px;top:467px;letter-spacing:0.02px">May 12, 2009</div><div class="t bt" style="right:12px;top:480px;letter-spacing:-0.045px">FLUENT 6.2 (2d, segregated, vof, ske, unsteady)</div></body></html>
